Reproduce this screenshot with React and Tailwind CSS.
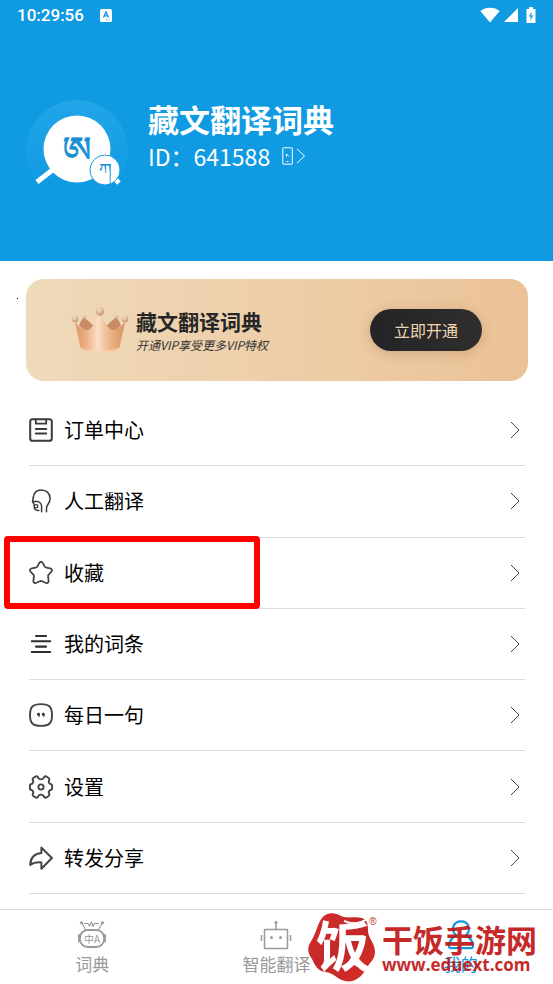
import React from 'react';

const OrderIcon = () => (
  <svg viewBox="0 0 24 24" className="size-6" fill="none" stroke="#3a3a3a" strokeWidth="2" strokeLinecap="round">
    <rect x="1.2" y="1.2" width="21.6" height="21.6" rx="2.4" />
    <path d="M6.8 1.6v4h10.4v-4" strokeWidth="1.8" />
    <path d="M6.8 11h10.4M6.8 15.600h10.4" />
  </svg>
);

const HumanIcon = () => (
  <svg viewBox="0 0 24 24" className="size-6" fill="none" stroke="#3a3a3a" strokeWidth="1.5" strokeLinecap="round" strokeLinejoin="round">
    <path d="M4.300 8.600C4.800 3.800 8 1 12.400 1c5 0 8.700 3.600 8.700 8.400 0 5.400-3.600 6-3.600 9.600v3.800" />
    <path d="M4.300 8.600l-.8 4h5.700c2.200.8 3.400 2.600 3.400 5v5.200M3.500 12.600l1.700 2.700v2.400c.2 2.200.8 3.500 2.200 3.500l2.500.3" />
    <path d="M5.600 15.800h3v2.600l-2.300.5" strokeWidth="1.200" />
  </svg>
);

const StarIcon = () => (
  <svg viewBox="0 0 24 24" className="size-6" fill="none" stroke="#444" strokeWidth="1.800" strokeLinejoin="round">
    <path d="M10.300 1.900c.8-1.400 2.600-1.400 3.400 0l1.700 3.300c.4.8 1 1.300 1.900 1.400l3.900.7c1.800.4 2.300 2 1.200 3.300l-2.600 2.900c-.6.600-.8 1.200-.7 2l.5 4c.2 2.200-1.300 3.200-3.100 2.300l-3.300-1.500c-.8-.400-1.600-.400-2.400 0l-3.300 1.500c-1.800.9-3.300-.1-3.100-2.300l.5-4c.1-.8-.1-1.400-.7-2l-2.600-2.900C.5 9.300 1 7.700 2.800 7.300l3.900-.7c.9-.1 1.500-.6 1.900-1.400z" />
  </svg>
);

const LinesIcon = () => (
  <svg viewBox="0 0 24 24" className="size-6" fill="none" stroke="#2e2e2e" strokeWidth="2.100" strokeLinecap="round">
    <path d="M7 4h10M2.800 9.300h18.400M7 14.600h10M2.800 20h18.400" />
  </svg>
);

const QuoteIcon = () => (
  <svg viewBox="0 0 24 24" className="size-6" fill="none" stroke="#444" strokeWidth="1.900">
    <path d="M12 1.100c8.200 0 11 2.700 11 10.900s-2.800 10.900-11 10.900S1 20.200 1 12 3.800 1.100 12 1.100z" />
    <path d="M11 11.200c0 1.800-.6 2.900-2 3.300.5-.6.800-1.100.8-1.700a1.500 1.500 0 1 1 1.200-1.600zM15.800 11.200c0 1.800-.6 2.900-2 3.300.5-.6.800-1.100.8-1.700a1.500 1.500 0 1 1 1.200-1.600z" fill="#333" stroke="none" />
  </svg>
);

const GearIcon = () => (
  <svg viewBox="0 0 24 24" className="size-6" fill="none" stroke="#444" strokeWidth="1.900" strokeLinejoin="round">
    <path d="M9.300 2.900C8.800 1.500 7.700.9 6.500 1.600L4.600 2.700c-1 .6-1.200 1.500-.7 2.600.9 2-.1 3.600-2 3.900-.8.200-1 .7-1 1.500v2.600c0 .8.3 1.300 1 1.500 2 .4 2.900 2 2 3.900-.5 1.100-.3 2 .7 2.600l1.900 1.100c1.200.7 2.300.1 2.800-1.300.7-2 4.700-2 5.400 0 .5 1.400 1.600 2 2.800 1.300l1.900-1.100c1-.6 1.200-1.500.7-2.600-.9-1.900.1-3.500 2-3.900.8-.2 1-.7 1-1.500v-2.600c0-.8-.3-1.300-1-1.500-1.900-.3-2.900-1.900-2-3.900.5-1.100.3-2-.7-2.600l-1.900-1.100c-1.200-.7-2.300-.1-2.800 1.300-.7 2-4.700 2-5.400 0z" />
    <circle cx="12" cy="12" r="2.600" />
  </svg>
);

const ShareIcon = () => (
  <svg viewBox="0 0 24 24" className="size-6" fill="none" stroke="#444" strokeWidth="2" strokeLinejoin="round">
    <path d="M12.400 1.600L22.900 12 12.400 22.700v-6.300C7.500 16 4 17 1.200 19c.3-7.600 4.300-11.500 11.200-12z" />
  </svg>
);

const CrownIcon = () => (
  <svg viewBox="0 0 58 46" className="h-[46px] w-[58px] shrink-0">
    <defs>
      <linearGradient id="crown" x1="0" x2="1" y1="0" y2="0">
        <stop offset="0" stopColor="#dc9665" />
        <stop offset=".25" stopColor="#eeb489" />
        <stop offset=".45" stopColor="#fadfc6" />
        <stop offset=".68" stopColor="#edb78c" />
        <stop offset="1" stopColor="#d98f5e" />
      </linearGradient>
      <radialGradient id="pearl" cx=".4" cy=".3" r=".8">
        <stop offset="0" stopColor="#fbe3cf" />
        <stop offset="1" stopColor="#c08660" />
      </radialGradient>
    </defs>
    <path d="M8 19c1-4 3-7 5-8 4 2 8 6 11 10l-6 6zM50 19c-1-4-3-7-5-8-4 2-8 6-11 10l6 6z" fill="#c98c64" />
    <path d="M4 14c4 8 12 12 17 6 3-4 5-9 8-12 3 3 5 8 8 12 5 6 13 2 17-6-1 9-4 16-5 26-1 4-8 5-20 5S10 44 9 40C8 30 5 23 4 14z" fill="url(#crown)" />
    <path d="M9 39c2 3 9 4 20 4s18-1 20-4c0 5-6 7-20 7S9 44 9 39z" fill="#f8d6b5" opacity=".6" />
    <circle cx="29" cy="4.500" r="4.200" fill="url(#pearl)" />
    <circle cx="4" cy="12" r="3.200" fill="url(#pearl)" />
    <circle cx="54" cy="12" r="3.200" fill="url(#pearl)" />
    <circle cx="13" cy="10" r="2" fill="url(#pearl)" />
    <circle cx="45" cy="10" r="2" fill="url(#pearl)" />
  </svg>
);

const Logo = () => (
  <svg viewBox="0 0 104 104" className="size-[104px] shrink-0 overflow-visible" role="img" aria-label="logo">
    <defs>
      <linearGradient id="halo" x1="0" x2="0" y1="0" y2="1">
        <stop offset="0" stopColor="#22a6e8" />
        <stop offset=".7" stopColor="#1a9fe5" stopOpacity=".5" />
        <stop offset=".85" stopColor="#0f9ae2" stopOpacity="0" />
      </linearGradient>
    </defs>
    <circle cx="51" cy="53" r="51" fill="url(#halo)" />
    <path d="M11 84l18-14" stroke="#fff" strokeWidth="5" />
    <circle cx="51" cy="51" r="33.500" fill="#fff" />
    <text x="51" y="64" textAnchor="middle" fontSize="36" fill="#1a8fd4" stroke="#1a8fd4" strokeWidth=".6" fontFamily="'Noto Serif Tibetan', 'Noto Sans Tibetan', 'DejaVu Sans', serif">ཨ</text>
    <path d="M87 79l6 6" stroke="#fff" strokeWidth="5" />
    <circle cx="79" cy="72" r="15" fill="#fff" stroke="#1a9be2" strokeWidth="1" />
    <text x="79" y="78" textAnchor="middle" fontSize="18" fill="#1a8fd4" fontFamily="'Noto Serif Tibetan', 'Noto Sans Tibetan', 'DejaVu Sans', serif">ཀ</text>
  </svg>
);

const DictIcon = () => (
  <svg viewBox="0 0 28 28" className="size-7" fill="none" stroke="#999" strokeLinecap="round" strokeLinejoin="round">
    <path d="M4 3.500l3.500 6M24 3.500l-3.500 6M6.500 3.500H10l1.500 2.500 2-4 1.500 4.500 1.500-3h4" strokeWidth="1.100" />
    <circle cx="3.500" cy="2.800" r="1.200" fill="#999" strokeWidth=".6" />
    <circle cx="24.500" cy="2.800" r="1.200" fill="#999" strokeWidth=".6" />
    <rect x="1.800" y="10" width="24.400" height="17" rx="8" strokeWidth="2" />
    <path d="M1 15v6.500M27 15v6.500" strokeWidth="1.800" />
    <text x="14" y="22.500" textAnchor="middle" fontSize="10" fill="#999" stroke="none" fontFamily="'Noto Sans CJK SC', sans-serif">中A</text>
  </svg>
);

const RobotIcon = () => (
  <svg viewBox="0 0 32 30" className="h-[30px] w-8" fill="none" stroke="#999" strokeWidth="1.500">
    <path d="M16 3.500v6M1.500 15v6M30.500 15v6" />
    <circle cx="16" cy="2.500" r="1.500" fill="#999" stroke="none" />
    <rect x="4.500" y="9.500" width="23" height="19" rx=".5" />
    <circle cx="11.500" cy="17.500" r="1.500" fill="#999" stroke="none" />
    <circle cx="20.500" cy="17.500" r="1.500" fill="#999" stroke="none" />
  </svg>
);

const UserIcon = () => (
  <svg viewBox="0 0 28 30" className="h-[30px] w-7" fill="none" stroke="#1296db" strokeWidth="2.200" strokeLinejoin="round">
    <path d="M9 15C3.500 10.500 6 1.300 14 1.300S24.500 10.500 19 15c4 2.500 6.300 6 7 10.500.2 1.700-.6 2.700-2 2.700H4c-1.400 0-2.200-1-2-2.700C2.700 21 5 17.500 9 15z" />
  </svg>
);

const Chevron = () => (
  <svg viewBox="0 0 10 18" className="h-[18px] w-[10px]" fill="none" stroke="#444">
    <path d="M1 1l8 8-8 8" />
  </svg>
);

const menu = [
  { title: '订单中心', icon: <OrderIcon /> },
  { title: '人工翻译', icon: <HumanIcon /> },
  { title: '收藏', icon: <StarIcon />, marked: true },
  { title: '我的词条', icon: <LinesIcon /> },
  { title: '每日一句', icon: <QuoteIcon /> },
  { title: '设置', icon: <GearIcon /> },
  { title: '转发分享', icon: <ShareIcon /> },
];

const tabs = [
  { title: '词典', icon: <DictIcon /> },
  { title: '智能翻译', icon: <RobotIcon /> },
  { title: '我的', icon: <UserIcon />, active: true },
];

function StatusBar() {
  return (
    <div className="flex h-[30px] items-center justify-between pl-[17px] pr-[17px] text-white">
      <div className="flex items-center gap-4">
        <span className="font-['Roboto',sans-serif] text-[17px] font-medium leading-5">10:29:56</span>
        <svg viewBox="0 0 12 13" className="h-[13px] w-3">
          <rect width="12" height="13" rx="1.500" fill="#fff" />
          <path d="M3.500 8.500L6 2.800l2.500 5.700M4.400 6.800h3.200" stroke="#0f9ae2" strokeWidth="1.300" fill="none" />
          <path d="M6 10.800h1M8.500 10.800h1" stroke="#0f9ae2" />
        </svg>
      </div>
      <div className="flex items-center gap-1">
        <svg viewBox="0 0 20 16" className="h-4 w-5" fill="#fff">
          <path d="M10 15.500L.3 4C5.500-.5 14.500-.5 19.700 4z" />
        </svg>
        <svg viewBox="0 0 14 14" className="size-[14px]" fill="#fff">
          <path d="M14 0v14H0z" />
        </svg>
        <svg viewBox="0 0 10 16" className="ml-1 h-4 w-[10px]">
          <path d="M3 0h4v2h2.500v14H.5V2H3z" fill="#fff" />
          <path d="M5.800 4.500L2.800 9.600h2L4.300 13.500l3-5H5.200z" fill="#0f9ae2" />
        </svg>
      </div>
    </div>
  );
}

function Watermark() {
  return (
    <div className="pointer-events-none absolute right-4 top-0 flex items-start text-[#bf1414] opacity-90">
      <svg viewBox="0 0 76 74" className="h-[74px] w-[76px] overflow-visible">
        <defs>
          <linearGradient id="seal" x1="0" x2="1" y1="0" y2="1">
            <stop offset="0" stopColor="#d01a18" />
            <stop offset=".5" stopColor="#bd1010" />
            <stop offset="1" stopColor="#d51a12" />
          </linearGradient>
        </defs>
        <path d="M14 11C18 3 27 1 35 6c7 3 14 0 21 2 6 2 6 8 6 13 0 7 7 12 7 21 0 8-6 11-9 17-4 8-12 14-21 12-7-1-11-8-19-9C11 61 9 55 6 49c-4-5-5-11-2-16 5-7 6-14 10-22z" fill="url(#seal)" />
        <path d="M38 11c7 3 16 3 23-2" stroke="#fff" strokeWidth="2" fill="none" />
        <path d="M46 46c6 8 14 12 25 12l-2 2c-10 0-19-2-26-9z" fill="#fff" />
        <text x="37" y="57" textAnchor="middle" fontSize="54" fontWeight="700" fill="#fff" fontFamily="'Noto Sans CJK SC', sans-serif">饭</text>
        <text x="67" y="15" textAnchor="middle" fontSize="10" fill="#c01212" fontFamily="'Liberation Sans', sans-serif">®</text>
      </svg>
      <div className="pt-[10px]">
        <p className="text-[31px] font-bold leading-[37px]">干饭手游网</p>
        <p className="font-['Open_Sans',sans-serif] text-[17px] font-bold leading-4">www.eduext.com</p>
      </div>
    </div>
  );
}

function App() {
  return (
    <div className="flex min-h-screen flex-col overflow-hidden bg-white font-['Noto_Sans_CJK_SC',sans-serif] text-black">
      <header className="h-[261px] bg-[#0f9ae2] text-white">
        <StatusBar />
        <div className="flex items-start gap-[18px] pl-[26px] pt-[68px]">
          <Logo />
          <div>
            <h1 className="text-[31px] font-bold leading-[42px]">藏文翻译词典</h1>
            <button type="button" className="flex items-center gap-3 text-[23px] leading-8">
              <span>ID：641588</span>
              <svg viewBox="0 0 24 18" className="h-[18px] w-6" fill="none" stroke="#fff">
                <rect x=".8" y=".8" width="9.500" height="16.400" rx=".5" />
                <path d="M4.500 7l2.500 2.500M4.500 7v2.500M4.500 14.500h2M15 2l7.500 7L15 16" />
              </svg>
            </button>
          </div>
        </div>
      </header>

      <main className="flex grow flex-col pb-[15px]">
        <section className="relative ml-[26px] mr-[25px] mt-[18px] flex h-[102px] items-center rounded-[18px] bg-linear-to-r from-[#efdabb] to-[#ebc296] pl-[45px] pr-[46px]">
          <span className="absolute -left-[9px] top-[19px] size-px bg-black" />
          <CrownIcon />
          <div className="ml-[7px] grow pt-[2px]">
            <h2 className="text-[21px] font-bold leading-7 text-[#262626]">藏文翻译词典</h2>
            <p className="text-xs italic leading-5 text-[#333]">开通VIP享受更多VIP特权</p>
          </div>
          <button type="button" className="h-[42px] w-28 rounded-full bg-linear-to-r from-[#242426] to-[#302e2d] text-base text-[#f0d5b3] shadow-[0_2px_12px_rgba(120,80,40,0.25)]">
            立即开通
          </button>
        </section>

        <ul className="mt-[14px] flex grow flex-col pl-[29px] pr-7">
          {menu.map((item) => (
            <li key={item.title} className="relative flex min-h-[60px] flex-1 border-b border-[#dcdcdc]">
              <a href="#" className="flex grow items-center gap-[11px] text-xl">
                {item.icon}
                <span className="grow">{item.title}</span>
                <span className="mr-[5px]">
                  <Chevron />
                </span>
              </a>
              {item.marked && (
                <span className="pointer-events-none absolute -bottom-px -left-[25px] -top-[2px] z-10 w-64 rounded-[4px] border-[6px] border-[#fe0000]" />
              )}
            </li>
          ))}
        </ul>
      </main>

      <nav className="relative grid h-[75px] grid-cols-3 border-t border-[#dcdcdc]">
        {tabs.map((tab) => (
          <a
            key={tab.title}
            href="#"
            className={`flex flex-col items-center pt-[10px] text-[17px] leading-5 ${tab.active ? 'text-[#1296db]' : 'text-[#999]'}`}
          >
            <span className="flex h-[34px] items-start">{tab.icon}</span>
            {tab.title}
          </a>
        ))}
        <Watermark />
      </nav>
    </div>
  );
}

export default App;
